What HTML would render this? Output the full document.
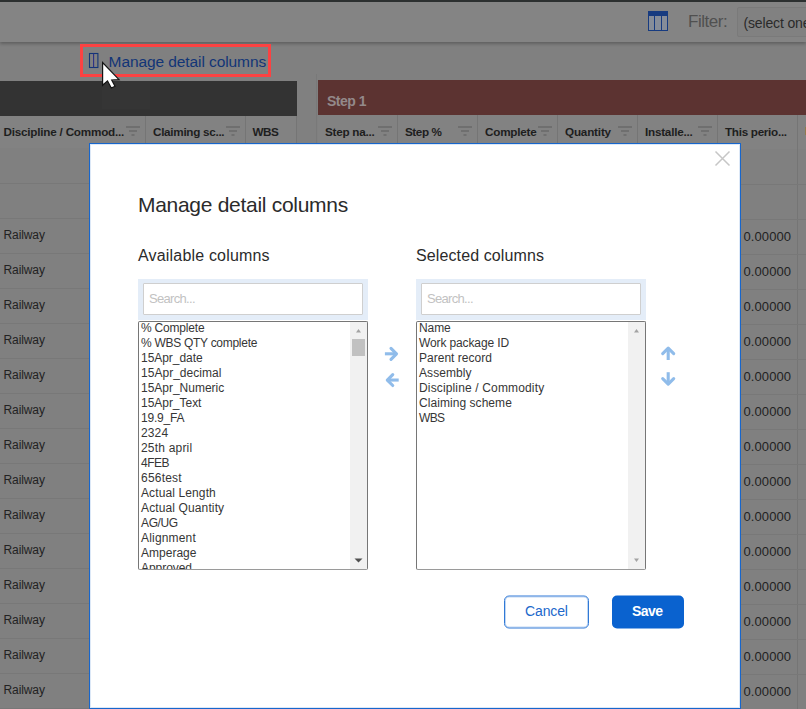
<!DOCTYPE html>
<html><head><meta charset="utf-8"><title>Manage detail columns</title>
<style>
html,body{margin:0;padding:0;}
body{width:806px;height:709px;overflow:hidden;position:relative;background:#808080;font-family:"Liberation Sans",sans-serif;color:#1c1c1c;}
.abs{position:absolute;white-space:nowrap;}
#topstrip{left:0;top:0;width:806px;height:2px;background:#2c3030;}
#toolbar{left:0;top:0;width:806px;height:42px;background:#848484;box-shadow:0 2px 3px rgba(0,0,0,0.25);}
#filterlbl{left:688px;top:12px;font-size:17px;color:#505050;}
#selbox{left:737px;top:7px;width:80px;height:30px;background:#818181;border:1px solid #7a7a7a;box-sizing:border-box;border-radius:2px;}
#seltxt{left:743.5px;top:14.5px;font-size:14px;color:#2a2a2a;}
#redbox{left:80px;top:44px;width:191px;height:33px;border:3px solid #fb4242;box-sizing:border-box;}
#mlink{left:108.6px;top:53px;font-size:15.5px;line-height:17px;color:#123577;}
#darkbar{left:0;top:81px;width:297px;height:35px;background:#333333;}
#stepbar{left:318px;top:80px;width:488px;height:35px;background:#5c3331;}
#steptxt{left:327px;top:93px;font-size:14px;line-height:16px;font-weight:bold;color:#93898a;}
.hdr{height:33px;background:#828282;}
.vl{position:absolute;width:1px;background:#757575;}
.ht{font-size:11.7px;font-weight:bold;color:#1e1e1e;line-height:14px;}
.fi{position:absolute;width:14px;height:10px;top:126px;}
.row{position:absolute;height:1px;background:#787878;}
.rw{left:3.5px;font-size:12px;line-height:14px;color:#222;}
.zv{left:743.5px;font-size:13px;line-height:15px;color:#222;}
#modal{left:89px;top:143px;width:652px;height:566px;background:#fff;border:1px solid #1766cc;box-sizing:border-box;box-shadow:inset 0 0 0 1px rgba(23,102,204,0.15);}
#mtitle{left:138px;top:193px;font-size:21px;line-height:24px;color:#2b2b2b;}
.sub{top:246.5px;font-size:16px;line-height:18px;color:#2b2b2b;}
.sw{top:279px;width:230px;height:41px;background:#e4edf8;}
.si{top:283px;width:220px;height:32px;background:#fff;border:1px solid #cfcfcf;box-sizing:border-box;border-radius:1px;}
.ph{top:291px;font-size:13px;line-height:15px;color:#c2c2c2;}
.lb{top:321px;width:230px;height:249px;border:1px solid #767676;box-sizing:border-box;background:#fff;overflow:hidden;border-radius:2px;border-bottom-color:#9a9a9a;}
.lb .in{position:absolute;left:0;top:0;transform:translateY(-0.5px);}
.it{left:2px;font-size:12px;line-height:15px;color:#363636;}
.sb{position:absolute;right:0;top:0;width:17px;height:100%;background:#f1f1f1;}
.thumb{position:absolute;left:2px;top:17px;width:13px;height:17px;background:#c1c1c1;}
.btn{top:595px;height:33px;box-sizing:border-box;border-radius:5px;transform:translateY(0.5px);}
#cancel{left:504px;width:85px;border:1px solid #3079d6;background:#fff;box-shadow:inset 0 0 0 1px rgba(48,121,214,0.3);}
#save{left:612px;width:72px;background:#0a62cf;}
.bt{font-size:14px;line-height:16px;top:603px;}
#canceltxt{left:525px;color:#2168cb;}
#savetxt{left:632px;color:#fff;font-weight:bold;}
</style></head><body>
<div class="abs" id="toolbar"></div><div class="abs" id="topstrip"></div>
<svg class="abs" style="left:647px;top:10px" width="22" height="22" viewBox="0 0 22 22"><rect x="1.5" y="1.5" width="19" height="19" fill="#868d99" stroke="#173b80" stroke-width="1"/><rect x="1" y="1" width="20" height="5" fill="#173b80"/><line x1="7.5" y1="1" x2="7.5" y2="21" stroke="#173b80" stroke-width="1"/><line x1="14.5" y1="1" x2="14.5" y2="21" stroke="#173b80" stroke-width="1"/></svg>
<div id="filterlbl" class="abs " style=";letter-spacing:-0.457px">Filter:</div>
<div class="abs" id="selbox"></div>
<div id="seltxt" class="abs " style=";letter-spacing:-0.150px">(select one)</div>
<div class="abs" id="redbox"></div>
<svg class="abs" style="left:88px;top:52px" width="12" height="17" viewBox="0 0 12 17"><rect x="1.5" y="1.5" width="8.4" height="14" fill="none" stroke="#123577" stroke-width="1.1"/><line x1="5.6" y1="1.5" x2="5.6" y2="15.5" stroke="#2a2f86" stroke-width="1.1"/></svg>
<div id="mlink" class="abs " style=";letter-spacing:-0.090px">Manage detail columns</div>
<div class="abs" id="darkbar"></div><div class="abs" id="stepbar"></div>
<div class="abs" style="left:102px;top:81px;width:48px;height:28px;background:#353535"></div>
<div id="steptxt" class="abs " style=";letter-spacing:-0.519px">Step 1</div>
<div class="abs hdr" style="left:0;top:116px;width:297px;height:32px"></div>
<div class="vl" style="left:316px;top:74px;height:75px;background:#797979"></div>
<div class="vl" style="left:296px;top:116px;height:32px"></div>
<div class="abs hdr" style="left:318px;top:115px;width:488px;height:34px"></div>
<div id="h0" class="abs ht" style="left:3.5px;top:124.5px;letter-spacing:-0.216px">Discipline / Commod...</div>
<svg class="fi" style="left:126px" viewBox="0 0 14 10"><path d="M0 1H14M3 5H11M5.5 9H8.5" stroke="#696969" stroke-width="1.5" fill="none"/></svg>
<div class="vl" style="left:145px;top:116px;height:32px"></div>
<div id="h1" class="abs ht" style="left:153px;top:124.5px;letter-spacing:-0.289px">Claiming sc...</div>
<svg class="fi" style="left:226px" viewBox="0 0 14 10"><path d="M0 1H14M3 5H11M5.5 9H8.5" stroke="#696969" stroke-width="1.5" fill="none"/></svg>
<div class="vl" style="left:245px;top:116px;height:32px"></div>
<div id="h2" class="abs ht" style="left:252.5px;top:124.5px;letter-spacing:-0.427px">WBS</div>
<div id="h3" class="abs ht" style="left:325px;top:125.3px;letter-spacing:-0.257px">Step na...</div>
<svg class="fi" style="left:378px" viewBox="0 0 14 10"><path d="M0 1H14M3 5H11M5.5 9H8.5" stroke="#696969" stroke-width="1.5" fill="none"/></svg>
<div class="vl" style="left:397px;top:115px;height:34px"></div>
<div id="h4" class="abs ht" style="left:405px;top:125.3px;letter-spacing:-0.428px">Step %</div>
<svg class="fi" style="left:458px" viewBox="0 0 14 10"><path d="M0 1H14M3 5H11M5.5 9H8.5" stroke="#696969" stroke-width="1.5" fill="none"/></svg>
<div class="vl" style="left:477px;top:115px;height:34px"></div>
<div id="h5" class="abs ht" style="left:485px;top:125.3px;letter-spacing:-0.221px">Complete</div>
<svg class="fi" style="left:538px" viewBox="0 0 14 10"><path d="M0 1H14M3 5H11M5.5 9H8.5" stroke="#696969" stroke-width="1.5" fill="none"/></svg>
<div class="vl" style="left:557px;top:115px;height:34px"></div>
<div id="h6" class="abs ht" style="left:565px;top:125.3px;letter-spacing:-0.188px">Quantity</div>
<svg class="fi" style="left:618px" viewBox="0 0 14 10"><path d="M0 1H14M3 5H11M5.5 9H8.5" stroke="#696969" stroke-width="1.5" fill="none"/></svg>
<div class="vl" style="left:637px;top:115px;height:34px"></div>
<div id="h7" class="abs ht" style="left:645px;top:125.3px;letter-spacing:-0.229px">Installe...</div>
<svg class="fi" style="left:698px" viewBox="0 0 14 10"><path d="M0 1H14M3 5H11M5.5 9H8.5" stroke="#696969" stroke-width="1.5" fill="none"/></svg>
<div class="vl" style="left:717px;top:115px;height:34px"></div>
<div id="h8" class="abs ht" style="left:725px;top:125.3px;letter-spacing:-0.292px">This perio...</div>
<div class="vl" style="left:797px;top:115px;height:34px"></div>
<div class="vl" style="left:797px;top:149px;height:560px"></div>
<div class="abs" style="left:805px;top:127px;width:1px;height:8px;background:#917a4e"></div>
<div class="row" style="left:0;width:89px;top:183px"></div>
<div class="row" style="left:741px;width:65px;top:184px"></div>
<div class="row" style="left:0;width:89px;top:218px"></div>
<div class="row" style="left:741px;width:65px;top:219px"></div>
<div class="row" style="left:0;width:89px;top:253px"></div>
<div class="row" style="left:741px;width:65px;top:254px"></div>
<div class="row" style="left:0;width:89px;top:288px"></div>
<div class="row" style="left:741px;width:65px;top:289px"></div>
<div class="row" style="left:0;width:89px;top:323px"></div>
<div class="row" style="left:741px;width:65px;top:324px"></div>
<div class="row" style="left:0;width:89px;top:358px"></div>
<div class="row" style="left:741px;width:65px;top:359px"></div>
<div class="row" style="left:0;width:89px;top:393px"></div>
<div class="row" style="left:741px;width:65px;top:394px"></div>
<div class="row" style="left:0;width:89px;top:428px"></div>
<div class="row" style="left:741px;width:65px;top:429px"></div>
<div class="row" style="left:0;width:89px;top:463px"></div>
<div class="row" style="left:741px;width:65px;top:464px"></div>
<div class="row" style="left:0;width:89px;top:498px"></div>
<div class="row" style="left:741px;width:65px;top:499px"></div>
<div class="row" style="left:0;width:89px;top:533px"></div>
<div class="row" style="left:741px;width:65px;top:534px"></div>
<div class="row" style="left:0;width:89px;top:568px"></div>
<div class="row" style="left:741px;width:65px;top:569px"></div>
<div class="row" style="left:0;width:89px;top:603px"></div>
<div class="row" style="left:741px;width:65px;top:604px"></div>
<div class="row" style="left:0;width:89px;top:638px"></div>
<div class="row" style="left:741px;width:65px;top:639px"></div>
<div class="row" style="left:0;width:89px;top:673px"></div>
<div class="row" style="left:741px;width:65px;top:674px"></div>
<div class="row" style="left:0;width:89px;top:708px"></div>
<div class="row" style="left:741px;width:65px;top:709px"></div>
<div id="rw2" class="abs rw" style="top:228px;letter-spacing:-0.102px">Railway</div>
<div id="zv2" class="abs zv" style="top:229px;letter-spacing:0.100px">0.00000</div>
<div id="rw3" class="abs rw" style="top:263px;letter-spacing:-0.102px">Railway</div>
<div id="zv3" class="abs zv" style="top:264px;letter-spacing:0.100px">0.00000</div>
<div id="rw4" class="abs rw" style="top:298px;letter-spacing:-0.102px">Railway</div>
<div id="zv4" class="abs zv" style="top:299px;letter-spacing:0.100px">0.00000</div>
<div id="rw5" class="abs rw" style="top:333px;letter-spacing:-0.102px">Railway</div>
<div id="zv5" class="abs zv" style="top:334px;letter-spacing:0.100px">0.00000</div>
<div id="rw6" class="abs rw" style="top:368px;letter-spacing:-0.102px">Railway</div>
<div id="zv6" class="abs zv" style="top:369px;letter-spacing:0.100px">0.00000</div>
<div id="rw7" class="abs rw" style="top:403px;letter-spacing:-0.102px">Railway</div>
<div id="zv7" class="abs zv" style="top:404px;letter-spacing:0.100px">0.00000</div>
<div id="rw8" class="abs rw" style="top:438px;letter-spacing:-0.102px">Railway</div>
<div id="zv8" class="abs zv" style="top:439px;letter-spacing:0.100px">0.00000</div>
<div id="rw9" class="abs rw" style="top:473px;letter-spacing:-0.102px">Railway</div>
<div id="zv9" class="abs zv" style="top:474px;letter-spacing:0.100px">0.00000</div>
<div id="rw10" class="abs rw" style="top:508px;letter-spacing:-0.102px">Railway</div>
<div id="zv10" class="abs zv" style="top:509px;letter-spacing:0.100px">0.00000</div>
<div id="rw11" class="abs rw" style="top:543px;letter-spacing:-0.102px">Railway</div>
<div id="zv11" class="abs zv" style="top:544px;letter-spacing:0.100px">0.00000</div>
<div id="rw12" class="abs rw" style="top:578px;letter-spacing:-0.102px">Railway</div>
<div id="zv12" class="abs zv" style="top:579px;letter-spacing:0.100px">0.00000</div>
<div id="rw13" class="abs rw" style="top:613px;letter-spacing:-0.102px">Railway</div>
<div id="zv13" class="abs zv" style="top:614px;letter-spacing:0.100px">0.00000</div>
<div id="rw14" class="abs rw" style="top:648px;letter-spacing:-0.102px">Railway</div>
<div id="zv14" class="abs zv" style="top:649px;letter-spacing:0.100px">0.00000</div>
<div id="rw15" class="abs rw" style="top:683px;letter-spacing:-0.102px">Railway</div>
<div id="zv15" class="abs zv" style="top:684px;letter-spacing:0.100px">0.00000</div>
<div class="abs" id="modal"></div>
<svg class="abs" style="left:714px;top:150px" width="17" height="17" viewBox="0 0 17 17"><path d="M1.5 1.5 L15.5 15.5 M15.5 1.5 L1.5 15.5" stroke="#c6c6c6" stroke-width="1.5" fill="none"/></svg>
<div id="mtitle" class="abs " style=";letter-spacing:-0.289px">Manage detail columns</div>
<div id="sub1" class="abs sub" style="left:138px;letter-spacing:0.184px">Available columns</div>
<div id="sub2" class="abs sub" style="left:416px;letter-spacing:0.113px">Selected columns</div>
<div class="abs sw" style="left:138px"></div><div class="abs si" style="left:143px"></div>
<div id="ph0" class="abs ph" style="left:149px;letter-spacing:-0.681px">Search...</div>
<div class="abs sw" style="left:416px"></div><div class="abs si" style="left:421px"></div>
<div id="ph1" class="abs ph" style="left:427px;letter-spacing:-0.681px">Search...</div>
<div class="abs lb" style="left:138px"><div class="in">
<div id="l0_0" class="abs it" style="top:-1px;letter-spacing:-0.197px">% Complete</div>
<div id="l0_1" class="abs it" style="top:14px;letter-spacing:-0.281px">% WBS QTY complete</div>
<div id="l0_2" class="abs it" style="top:29px;letter-spacing:-0.046px">15Apr_date</div>
<div id="l0_3" class="abs it" style="top:44px;letter-spacing:0.027px">15Apr_decimal</div>
<div id="l0_4" class="abs it" style="top:59px;letter-spacing:-0.013px">15Apr_Numeric</div>
<div id="l0_5" class="abs it" style="top:74px;letter-spacing:-0.030px">15Apr_Text</div>
<div id="l0_6" class="abs it" style="top:89px;letter-spacing:-0.200px">19.9_FA</div>
<div id="l0_7" class="abs it" style="top:104px;letter-spacing:0.124px">2324</div>
<div id="l0_8" class="abs it" style="top:119px;letter-spacing:0.192px">25th april</div>
<div id="l0_9" class="abs it" style="top:134px;letter-spacing:-0.504px">4FEB</div>
<div id="l0_10" class="abs it" style="top:149px;letter-spacing:0.204px">656test</div>
<div id="l0_11" class="abs it" style="top:164px;letter-spacing:0.116px">Actual Length</div>
<div id="l0_12" class="abs it" style="top:179px;letter-spacing:0.122px">Actual Quantity</div>
<div id="l0_13" class="abs it" style="top:194px;letter-spacing:-0.374px">AG/UG</div>
<div id="l0_14" class="abs it" style="top:209px;letter-spacing:0.181px">Alignment</div>
<div id="l0_15" class="abs it" style="top:224px;letter-spacing:0.016px">Amperage</div>
<div id="l0_16" class="abs it" style="top:239px;letter-spacing:-0.047px">Approved</div>
</div><div class="sb"><svg style="position:absolute;left:0;top:0" width="17" height="17"><path d="M6 10.5 L8.5 7 L11 10.5 Z" fill="#a3a3a3"/></svg><div class="thumb"></div><svg style="position:absolute;left:0;bottom:0" width="17" height="17"><path d="M4.5 6.5 L12.5 6.5 L8.5 10.5 Z" fill="#505050"/></svg></div></div>
<div class="abs lb" style="left:416px"><div class="in">
<div id="l1_0" class="abs it" style="top:-1px;letter-spacing:-0.079px">Name</div>
<div id="l1_1" class="abs it" style="top:14px;letter-spacing:-0.122px">Work package ID</div>
<div id="l1_2" class="abs it" style="top:29px;letter-spacing:0.015px">Parent record</div>
<div id="l1_3" class="abs it" style="top:44px;letter-spacing:0.073px">Assembly</div>
<div id="l1_4" class="abs it" style="top:59px;letter-spacing:0.148px">Discipline / Commodity</div>
<div id="l1_5" class="abs it" style="top:74px;letter-spacing:0.057px">Claiming scheme</div>
<div id="l1_6" class="abs it" style="top:89px;letter-spacing:-0.615px">WBS</div>
</div><div class="sb"><svg style="position:absolute;left:0;top:0" width="17" height="17"><path d="M6 10.5 L8.5 7 L11 10.5 Z" fill="#a3a3a3"/></svg><svg style="position:absolute;left:0;bottom:0" width="17" height="17"><path d="M6 6.5 L11 6.5 L8.5 10 Z" fill="#a3a3a3"/></svg></div></div>
<svg class="abs" style="left:384px;top:346px" width="16" height="16" viewBox="0 0 16 16"><path d="M0.9 7.8 H11" stroke="#90bcea" stroke-width="3.1" fill="none"/><path d="M7 2.3 L12.5 7.8 L7 13.3" stroke="#90bcea" stroke-width="3.1" fill="none" stroke-linecap="round" stroke-linejoin="round"/></svg>
<svg class="abs" style="left:384px;top:372px" width="16" height="16" viewBox="0 0 16 16"><path d="M14.7 8.05 H5" stroke="#90bcea" stroke-width="3.1" fill="none"/><path d="M8.75 2.6 L3.3 8.05 L8.75 13.5" stroke="#90bcea" stroke-width="3.1" fill="none" stroke-linecap="round" stroke-linejoin="round"/></svg>
<svg class="abs" style="left:660px;top:345px" width="16" height="16" viewBox="0 0 16 16"><path d="M8.2 15 V4" stroke="#90bcea" stroke-width="3.1" fill="none"/><path d="M2.7 8.6 L8.2 3.2 L13.7 8.6" stroke="#90bcea" stroke-width="3.1" fill="none" stroke-linecap="round" stroke-linejoin="round"/></svg>
<svg class="abs" style="left:660px;top:371px" width="16" height="16" viewBox="0 0 16 16"><path d="M8.2 1.2 V12" stroke="#90bcea" stroke-width="3.1" fill="none"/><path d="M2.7 7.7 L8.2 13.1 L13.7 7.7" stroke="#90bcea" stroke-width="3.1" fill="none" stroke-linecap="round" stroke-linejoin="round"/></svg>
<div class="abs btn" id="cancel"></div><div class="abs btn" id="save"></div>
<div id="canceltxt" class="abs bt" style=";letter-spacing:-0.132px">Cancel</div>
<div id="savetxt" class="abs bt" style=";letter-spacing:-0.526px">Save</div>
<svg class="abs" style="left:96px;top:56px" width="30" height="36" viewBox="96 56 30 36"><path d="M102.6 62.6 L102.6 85.3 L107.5 80.9 L111.3 88 L115 86.2 L111.7 80 L119 79.6 Z" fill="#fff" stroke="#141414" stroke-width="1.2" stroke-linejoin="miter"/></svg>
</body></html>
